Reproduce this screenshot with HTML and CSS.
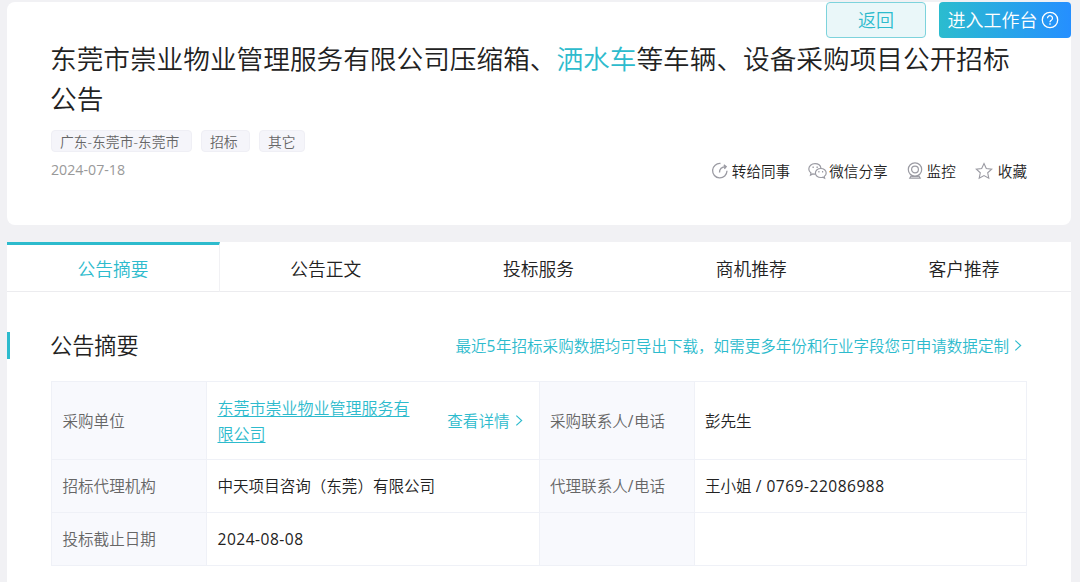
FILE: index.html
```html
<!DOCTYPE html>
<html lang="zh-CN">
<head>
    <meta charset="UTF-8">
    <meta name="viewport" content="width=device-width, initial-scale=1.0">
    <title>招标公告</title>
    <link rel="stylesheet" href="styles.css">
</head>
<body>
    <!-- Floating buttons -->
    <div class="top-buttons">
        <a href="#" class="btn btn-back">返回</a>
        <a href="#" class="btn btn-work">进入工作台
            <svg class="help-icon" viewBox="0 0 18 18" fill="none" stroke="#fff" stroke-width="1.3">
                <circle cx="9" cy="9" r="7.7"/>
                <path d="M6.5 7.2a2.5 2.5 0 1 1 3.8 2.1c-.9.5-1.3.9-1.3 2"/>
                <path d="M9 12.3v1.5"/>
            </svg>
        </a>
    </div>

    <!-- Notice header -->
    <header class="notice">
        <h1>东莞市崇业物业管理服务有限公司压缩箱、<span class="keyword">洒水车</span>等车辆、设备采购项目公开招标公告</h1>
        <div class="tags">
            <span class="tag tag-area">广东-东莞市-东莞市</span>
            <span class="tag">招标</span>
            <span class="tag tag-last">其它</span>
        </div>
        <div class="meta">
            <span class="date">2024-07-18</span>
            <div class="actions">
                <a href="#" class="action share">
                    <svg viewBox="0 0 18 18" width="18" height="18" fill="none" stroke="#9b9ba3" stroke-width="1.3">
                        <path d="M9.5 1.5A7.2 7.2 0 1 0 16 8.8"/>
                        <path d="M8.5 10.5c0-3.6 2-5.7 6.5-5.9M12.8 2.9l2.4 1.7-1.8 2.3"/>
                    </svg>
                    转给同事
                </a>
                <a href="#" class="action wechat">
                    <svg viewBox="0 0 19 18" width="19" height="18" fill="none" stroke="#9b9ba3" stroke-width="1.2">
                        <path d="M13 6.3C12.5 3.5 10 1.7 7 1.7 3.5 1.7.8 4 .8 7c0 1.7.9 3.1 2.2 4.1l-.5 2 2.3-1.2c.8.2 1.5.3 2.3.3"/>
                        <path d="M12.8 6.5c-3 0-5.4 2-5.4 4.5s2.4 4.5 5.4 4.5c.7 0 1.3-.1 1.9-.3l1.9 1-.4-1.7c1.2-.8 2-2.1 2-3.5 0-2.5-2.4-4.5-5.4-4.5z"/>
                        <path d="M4.5 5.2h1.3M8.5 5.2h1.3M10.3 9.7h1.2M14 9.7h1.2" stroke-width="1.5"/>
                    </svg>
                    微信分享
                </a>
                <a href="#" class="action monitor">
                    <svg viewBox="0 0 16 18" width="16" height="18" fill="none" stroke="#9b9ba3" stroke-width="1.2">
                        <circle cx="8" cy="7.5" r="6.7"/>
                        <circle cx="8" cy="7.5" r="3.4"/>
                        <path d="M4.5 13.2 2.8 16.2h10.4l-1.7-3M4.5 14.5h7"/>
                    </svg>
                    监控
                </a>
                <a href="#" class="action favorite">
                    <svg viewBox="0 0 18 18" width="18" height="18" fill="none" stroke="#9b9ba3" stroke-width="1.1">
                        <path d="M9 1.5l2.3 5 5.4.6-4 3.7 1.1 5.5L9 13.6l-4.8 2.7 1.1-5.5-4-3.7 5.4-.6z"/>
                    </svg>
                    收藏
                </a>
            </div>
        </div>
    </header>

    <!-- Notice body -->
    <main>
        <nav class="tabs">
            <a href="#" class="tab active">公告摘要</a>
            <a href="#" class="tab">公告正文</a>
            <a href="#" class="tab">投标服务</a>
            <a href="#" class="tab">商机推荐</a>
            <a href="#" class="tab">客户推荐</a>
        </nav>

        <div class="section-head">
            <h2>公告摘要</h2>
            <a href="#" class="more">
                <span>最近<span class="num">5</span>年招标采购数据均可导出下载，如需更多年份和行业字段您可申请数据定制</span>
                <svg class="arrow" viewBox="0 0 9 14"><path d="M1.5 1.5 7.5 7l-6 5.5"/></svg>
            </a>
        </div>

        <table class="summary">
            <tr class="row-buyer">
                <th>采购单位</th>
                <td>
                    <div class="company">
                        <a href="#" class="company-name">东莞市崇业物业管理服务有限公司</a>
                        <a href="#" class="detail">查看详情
                            <svg class="arrow" viewBox="0 0 9 14"><path d="M1.5 1.5 7.5 7l-6 5.5"/></svg>
                        </a>
                    </div>
                </td>
                <th>采购联系人<span class="num">/</span>电话</th>
                <td>彭先生</td>
            </tr>
            <tr>
                <th>招标代理机构</th>
                <td>中天项目咨询（东莞）有限公司</td>
                <th>代理联系人<span class="num">/</span>电话</th>
                <td>王小姐 <span class="num">/ 0769-22086988</span></td>
            </tr>
            <tr>
                <th>投标截止日期</th>
                <td><span class="num">2024-08-08</span></td>
                <th></th>
                <td></td>
            </tr>
        </table>
    </main>
</body>
</html>
```
FILE: styles.css
```css
/* General Styles */
* {
    box-sizing: border-box;
}

body {
    font-family: "Open Sans", "Noto Sans CJK SC", sans-serif;
    font-weight: 350;
    margin: 0;
    padding: 2px 9px 0 7px;
    height: 582px;
    overflow: hidden;
    background-color: #f1f1f4;
    color: #222;
}

a {
    color: inherit;
    text-decoration: none;
}

h1, h2 {
    margin: 0;
    font-weight: 350;
}

svg {
    flex-shrink: 0;
}

/* Floating buttons */
.top-buttons {
    position: absolute;
    top: 2px;
    right: 9px;
    display: flex;
    gap: 13px;
}

.btn {
    display: flex;
    align-items: center;
    justify-content: center;
    height: 36px;
    border-radius: 4px;
    font-size: 18px;
    line-height: 34px;
}

.btn-back {
    width: 100px;
    border: 1px solid #7dd3dc;
    background-color: #eaf7f9;
    color: #2dbbcd;
}

.btn-work {
    width: 132px;
    gap: 3px;
    padding-right: 4px;
    background: linear-gradient(to right, #2bbccf, #258fff);
    color: #fff;
}

.help-icon {
    width: 18px;
    height: 18px;
}

/* Notice header */
.notice {
    height: 223px;
    padding: 37px 44px 0 43px;
    background-color: #fff;
    border-radius: 8px;
}

.notice h1 {
    font-size: 26.66px;
    line-height: 40px;
}

.keyword {
    color: #2dbbcd;
}

.tags {
    display: flex;
    gap: 9px;
    margin: 11px 0 0 1px;
}

.tag {
    width: 49px;
    height: 22px;
    padding-left: 8px;
    border: 1px solid #efeff5;
    border-radius: 4px;
    background-color: #f5f5fa;
    color: #666;
    font-size: 13.8px;
    line-height: 21px;
    white-space: nowrap;
}

.tag-area {
    width: 141px;
}

.tag-last {
    width: 46px;
}

.meta {
    display: flex;
    justify-content: space-between;
    align-items: center;
    height: 37px;
}

.date {
    margin: 0 0 2px 1px;
    color: #999;
    font-size: 14.2px;
    font-weight: 400;
    line-height: 20px;
}

.actions {
    display: flex;
}

.action {
    display: flex;
    align-items: center;
    gap: 3px;
    font-size: 14.6px;
    line-height: 20px;
}

.wechat {
    margin-left: 18px;
    gap: 2px;
}

.monitor {
    margin-left: 19px;
    gap: 4px;
}

.favorite {
    margin-left: 19px;
    gap: 5px;
}

/* Tabs */
main {
    margin-top: 17px;
    height: 360px;
    background-color: #fff;
}

.tabs {
    display: flex;
    height: 50px;
}

.tab {
    flex: 1;
    padding: 3px 1px 0 0;
    border-bottom: 1px solid #ececef;
    font-size: 17.75px;
    line-height: 48px;
    text-align: center;
}

.tab.active {
    padding: 0;
    border-top: 3px solid #2dbbcd;
    border-right: 1px solid #f1f1f4;
    color: #2dbbcd;
}

/* Section title */
.section-head {
    display: flex;
    justify-content: space-between;
    align-items: center;
    height: 27px;
    margin-top: 40px;
    padding: 0 49px 0 40px;
    border-left: 3px solid #2dbbcd;
    border-radius: 0 2px 2px 0;
}

.section-head h2 {
    font-size: 22.2px;
    line-height: 28px;
}

.more, .detail {
    display: flex;
    align-items: center;
    gap: 5px;
    color: #2dbbcd;
    font-size: 15.55px;
    white-space: nowrap;
}

.arrow {
    width: 8px;
    height: 13px;
    fill: none;
    stroke: #2dbbcd;
    stroke-width: 1.3;
}

/* Summary table */
.summary {
    width: 976px;
    margin: 22px 0 0 44px;
    table-layout: fixed;
    border-collapse: collapse;
    font-size: 15.55px;
    line-height: 26px;
}

.summary th, .summary td {
    height: 53px;
    padding: 0 11px 0 10.5px;
    border: 1px solid #eff1f7;
    text-align: left;
    font-weight: 350;
}

.summary th {
    width: 155px;
    background-color: #f8f9fd;
    color: #666;
}

.summary .row-buyer th, .summary .row-buyer td {
    height: 78px;
}

.company {
    display: flex;
    justify-content: space-between;
    align-items: center;
    padding-right: 5px;
}

.company-name {
    width: 195px;
    color: #2dbbcd;
    font-size: 16px;
    text-decoration: underline;
    text-underline-offset: 2px;
}

.num {
    font-weight: 400;
    letter-spacing: 0.5px;
}
```
